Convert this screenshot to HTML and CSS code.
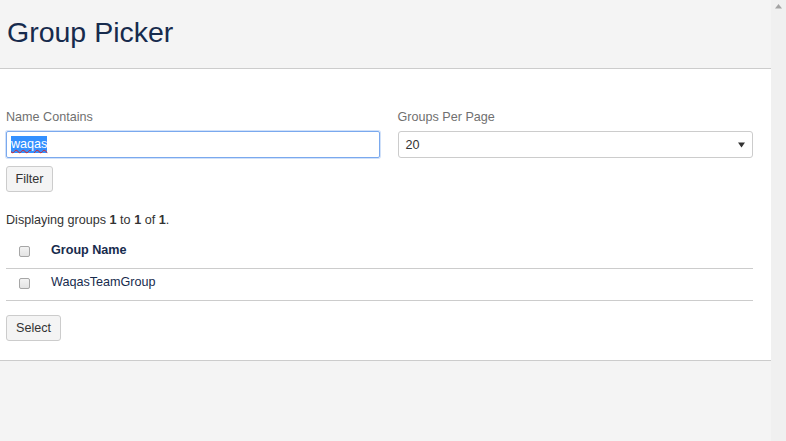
FILE: index.html
```html
<!DOCTYPE html>
<html>
<head>
  <title>Group Picker</title>
  <link rel="stylesheet" href="styles.css">
</head>
<body>
  <div class="page">
    <div class="page-header">
      <h1>Group Picker</h1>
    </div>

    <div class="page-content">
      <div class="filter-fields">
        <div class="field">
          <label>Name Contains</label>
          <div class="text-input"><span class="selected-text">waqas</span></div>
        </div>
        <div class="field">
          <label>Groups Per Page</label>
          <div class="select-input">
            <span>20</span>
            <svg width="7" height="6" viewBox="0 0 7 6"><path d="M0 0.5h7L3.5 5.5z" fill="#333"/></svg>
          </div>
        </div>
      </div>
      <button class="btn filter-btn">Filter</button>

      <p class="summary">Displaying groups <b>1</b> to <b>1</b> of <b>1</b>.</p>

      <table class="group-table">
        <thead>
          <tr>
            <th class="check-col"><span class="checkbox"></span></th>
            <th>Group Name</th>
          </tr>
        </thead>
        <tbody>
          <tr>
            <td class="check-col"><span class="checkbox"></span></td>
            <td>WaqasTeamGroup</td>
          </tr>
        </tbody>
      </table>

      <button class="btn select-btn">Select</button>
    </div>
  </div>

  <!-- fake window scrollbar on the right -->
  <div class="scrollbar">
    <svg width="7" height="5" viewBox="0 0 7 5"><path d="M3.5 0L7 4.5H0z" fill="#a3a3a3"/></svg>
  </div>
</body>
</html>
```

FILE: styles.css
```css
body {
  margin: 0;
  padding: 0;
  height: 100vh;
  display: flex;
  font-family: "Liberation Sans", Arial, sans-serif;
  font-size: 12.6px;
  color: #333;
  background-color: #f4f4f4;
  overflow: hidden;
}

.page {
  flex: 1;
  background-color: #f4f4f4;
}

.page-header {
  height: 69px;
  padding: 16px 0 0 7px;
  box-sizing: border-box;
  border-bottom: 1px solid #ccc;
}

.page-header h1 {
  margin: 0;
  font-size: 28.5px;
  font-weight: normal;
  line-height: 33px;
  color: #172b4d;
}

.page-content {
  background-color: #fff;
  padding: 39px 18px 19px 6px;
  border-bottom: 1px solid #ccc;
}

.filter-fields {
  display: grid;
  grid-template-columns: 50% 1fr;
  column-gap: 18px;
}

.field label {
  display: block;
  line-height: 18px;
  margin-bottom: 5px;
  color: #707070;
}

.text-input {
  height: 27px;
  box-sizing: border-box;
  border: 1px solid #7aa9ee;
  box-shadow: 0 0 0 1px rgba(122, 169, 238, 0.35);
  border-radius: 2px;
  padding-left: 4px;
  line-height: 25px;
}

.selected-text {
  background-color: #3390ff;
  color: #fff;
  padding: 1px 0 2px;
  text-decoration: underline wavy #e02020;
  text-decoration-thickness: 1px;
  text-underline-offset: 1px;
}

.select-input {
  height: 27px;
  box-sizing: border-box;
  border: 1px solid #ccc;
  border-radius: 3px;
  padding: 0 7px;
  display: flex;
  align-items: center;
  justify-content: space-between;
  color: #333;
}

.btn {
  display: block;
  height: 26px;
  padding: 0 8.5px;
  border: 1px solid #ccc;
  border-radius: 3px;
  background-color: #f4f4f4;
  font-family: inherit;
  font-size: 12.6px;
  color: #333;
}

.filter-btn {
  margin-top: 8px;
}

.summary {
  margin: 19px 0 0;
  line-height: 18px;
}

.group-table {
  width: 100%;
  margin-top: 8px;
  border-collapse: collapse;
  color: #172b4d;
}

.group-table th,
.group-table td {
  text-align: left;
  vertical-align: top;
  line-height: 18px;
  padding: 4px 10px 9px;
  border-bottom: 1px solid #ccc;
}

.group-table th {
  font-weight: bold;
}

.group-table .check-col {
  width: 11px;
  padding-left: 13px;
  padding-right: 11px;
}

.checkbox {
  display: block;
  width: 11px;
  height: 11px;
  margin-top: 5px;
  box-sizing: border-box;
  border: 1px solid #a6a6a6;
  border-radius: 2px;
  background: linear-gradient(#f3f3f3, #e3e3e3);
}

.select-btn {
  margin-top: 14px;
  padding: 0 9px;
}

.scrollbar {
  width: 15px;
  height: 100vh;
  background-color: #f0f0f0;
  display: flex;
  justify-content: center;
  padding-top: 4px;
  box-sizing: border-box;
}
```
